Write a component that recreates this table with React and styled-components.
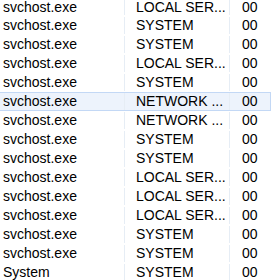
import styled, { createGlobalStyle } from "styled-components";

const GlobalStyle = createGlobalStyle`
  html, body {
    margin: 0;
    padding: 0;
    background: #ffffff;
    overflow: hidden;
  }
`;

const rows = [
  ["svchost.exe", "LOCAL SER...", "00"],
  ["svchost.exe", "SYSTEM", "00"],
  ["svchost.exe", "SYSTEM", "00"],
  ["svchost.exe", "LOCAL SER...", "00"],
  ["svchost.exe", "SYSTEM", "00"],
  ["svchost.exe", "NETWORK ...", "00"],
  ["svchost.exe", "NETWORK ...", "00"],
  ["svchost.exe", "SYSTEM", "00"],
  ["svchost.exe", "SYSTEM", "00"],
  ["svchost.exe", "LOCAL SER...", "00"],
  ["svchost.exe", "LOCAL SER...", "00"],
  ["svchost.exe", "LOCAL SER...", "00"],
  ["svchost.exe", "SYSTEM", "00"],
  ["svchost.exe", "SYSTEM", "00"],
  ["System", "SYSTEM", "00"],
];

const App = () => {
  return (
    <>
      <GlobalStyle />
      <ListView>
        {rows.map((r, i) => (
          <Row key={i} $selected={i === 5} $scrolled={i === 0}>
            <Cell $scrolled={i === 0}>{r[0]}</Cell>
            <Cell $scrolled={i === 0} $pad={11}>{r[1]}</Cell>
            <Cell $scrolled={i === 0} $pad={12} $last>{r[2]}</Cell>
          </Row>
        ))}
      </ListView>
    </>
  );
};

const ListView = styled.div`
  width: 271px;
  height: 280px;
  overflow: hidden;
  background: #ffffff;
  font-family: "Liberation Sans", Arial, sans-serif;
  font-size: 14px;
  color: #000000;
`;

/* first row is partly scrolled out of view */
const Row = styled.div`
  display: grid;
  grid-template-columns: 125px 105px 1fr;
  height: ${(p) => (p.$scrolled ? 16 : 19)}px;
  width: 271px;
  box-sizing: border-box;
  border: 1px solid ${(p) => (p.$selected ? "#c3d8f5" : "transparent")};
  border-left: none;
  border-top-width: ${(p) => (p.$scrolled ? 0 : 1)}px;
  background: ${(p) => (p.$selected ? "#edf3fc" : "transparent")};
`;

const Cell = styled.div`
  box-sizing: border-box;
  padding-top: ${(p) => (p.$scrolled ? 0 : 2)}px;
  padding-left: ${(p) => (p.$pad ? p.$pad : 3)}px;
  line-height: ${(p) => (p.$scrolled ? 15 : 13)}px;
  white-space: nowrap;
  overflow: hidden;
  border-right: ${(p) => (p.$last ? "none" : "1px solid #e6edf5")};
`;

export default App;
